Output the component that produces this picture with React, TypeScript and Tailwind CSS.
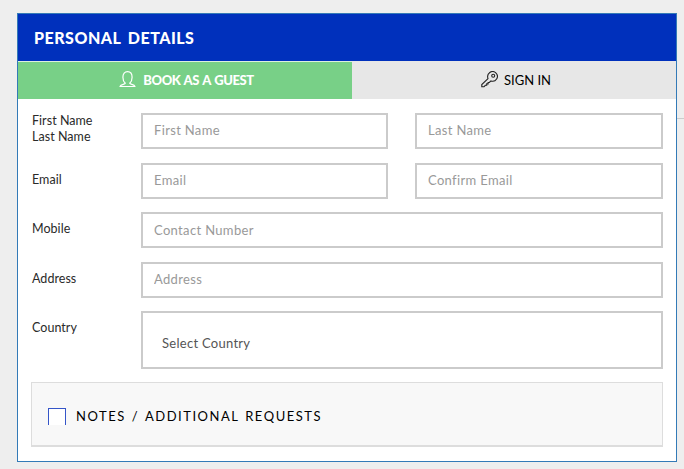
import React from "react";

const fieldBox = "h-9 min-w-0 border-2 border-[#cbcbcb] bg-white px-[11px] text-[13px] leading-4 tracking-[0.34px] text-[#777] placeholder:text-[#999] outline-none";

function Field({ label, className = "pb-[2px]" }: { label: string; className?: string }) {
  return <input aria-label={label} placeholder={label} className={`${fieldBox} ${className}`} />;
}

function Row({ gap, label, children }: { gap: string; label: React.ReactNode; children: React.ReactNode }) {
  return (
    <div className={`flex ${gap}`}>
      <div className="w-[110px] shrink-0 pl-px text-[12.5px] leading-4 tracking-[0.04px] text-[#2a2a2a]">{label}</div>
      <div className="flex w-[522px] justify-between">{children}</div>
    </div>
  );
}

function GuestIcon() {
  return (
    <svg width="17" height="17" viewBox="0 0 17 17" fill="none" stroke="white" strokeWidth="1.2" strokeLinejoin="round" className="mr-[7px] -mt-[2px]">
      <path d="M6.300 12.300C4.800 11 3.900 8.700 3.900 6.200c0-3.300 1.800-5.500 4.600-5.500s4.600 2.200 4.600 5.500c0 2.500-.9 4.800-2.400 6.100.5 1.300 4.500 1 5.300 3.200H1c.8-2.200 4.800-1.900 5.300-3.200Z" />
    </svg>
  );
}

function KeyIcon() {
  return (
    <svg width="17" height="17" viewBox="0 0 17 17" fill="none" stroke="#222" strokeWidth="1.1" className="mr-[6px] -mt-[2px]">
      <path d="M7 7.600C6.200 5.200 6.900 2.800 8.800 1.500c1.900-1.300 4.300-1.200 6 .4 1.700 1.600 2 4.200.8 6.100-1.200 1.900-3.500 2.600-5.600 1.900L8.300 11.500H7.100v1.400H5.700v1.400H4.300L3 15.800H.8v-2.200Z" />
      <circle cx="12.200" cy="4.700" r="1.500" />
    </svg>
  );
}

export default function App() {
  return (
    <main className="flex h-[469px] w-[684px] items-start overflow-hidden bg-[#eee] pt-[13px] pl-[17px] font-['Lato',sans-serif]">
      <section className="h-[449px] w-[660px] shrink-0 border border-[#337ab7] bg-white">
        <h1 className="h-[47px] bg-[#0030bc] pl-4 text-[16px] leading-[47px] font-black tracking-[0.5px] text-white [word-spacing:2.6px]">PERSONAL DETAILS</h1>
        <div className="flex h-[38px]">
          <button className="flex w-[334px] items-center justify-center border-t border-[#dcefe0] bg-[#78d087] pl-[3px] text-[13px] font-black tracking-[-0.42px] text-white [word-spacing:1px]">
            <GuestIcon />
            <span>BOOK AS A GUEST</span>
          </button>
          <button className="flex flex-1 items-center justify-center bg-[#e7e7e7] pl-[4px] text-[13px] text-black">
            <KeyIcon />
            <span className="pt-[2px]">SIGN IN</span>
          </button>
        </div>
        <form className="pt-[14px] pl-[13px]">
          <Row gap="mb-[14px]" label={<>First Name<br />Last Name</>}>
            <Field label="First Name" className="w-[247px] pb-[2px]" />
            <Field label="Last Name" className="w-[248px] pb-[2px]" />
          </Row>
          <Row gap="mb-[13px]" label={<div className="pt-[9px]">Email</div>}>
            <Field label="Email" className="w-[247px] pb-[2px]" />
            <Field label="Confirm Email" className="w-[248px] pb-[2px]" />
          </Row>
          <Row gap="mb-[14px]" label={<div className="pt-[9px]">Mobile</div>}>
            <Field label="Contact Number" className="w-full" />
          </Row>
          <Row gap="mb-[13px]" label={<div className="pt-[9px]">Address</div>}>
            <Field label="Address" className="w-full pb-[2px]" />
          </Row>
          <Row gap="mb-[13px]" label={<div className="pt-[9px]">Country</div>}>
            <div className="flex h-[58px] w-full items-center border-2 border-[#cbcbcb] pt-[7px] pl-[19px] text-[13px] tracking-[0.28px] text-[#555]">Select Country</div>
          </Row>
          <label className="flex h-[65px] w-[632px] items-center border border-b-2 border-[#ddd] bg-[#f8f8f8] pt-[4px] pl-4 text-[13px] tracking-[1.53px] text-black [word-spacing:1.2px]">
            <span className="mr-[10px] h-[17px] w-[18px] border border-b-0 border-[#3555c8] bg-white" />
            <span className="pt-[2px]">NOTES / ADDITIONAL REQUESTS</span>
          </label>
        </form>
      </section>
      <div className="mt-[105px] h-px w-[7px] shrink-0 bg-[#ccc]" />
    </main>
  );
}
